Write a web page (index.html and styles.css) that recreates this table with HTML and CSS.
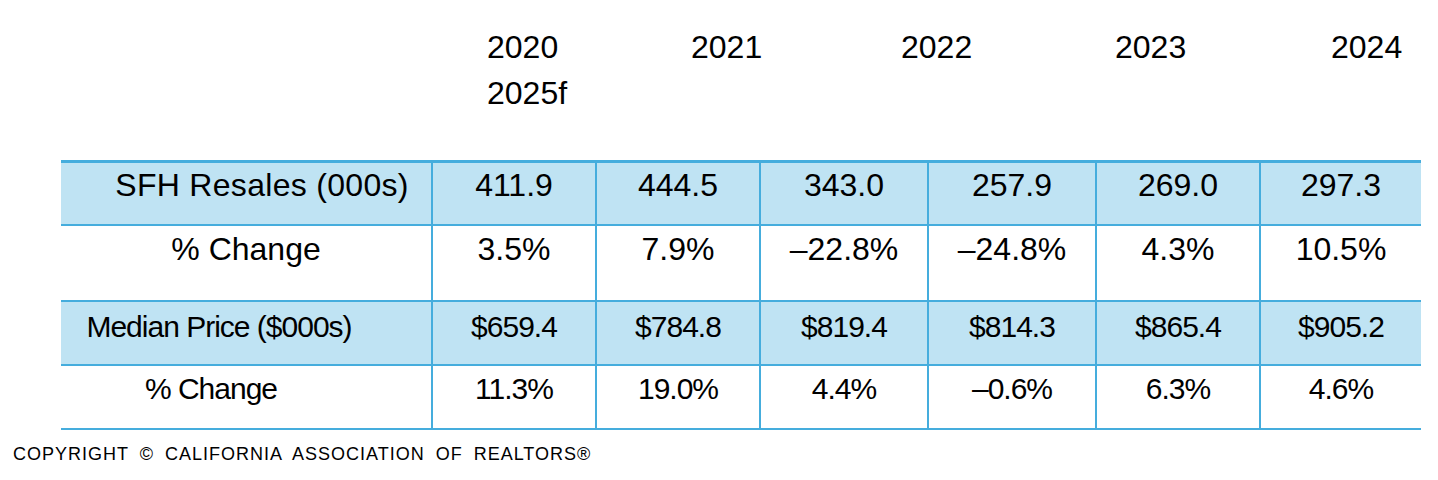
FILE: index.html
```html
<!DOCTYPE html>
<html lang="en">
<head>
<meta charset="utf-8">
<title>California Housing Forecast</title>
<link rel="stylesheet" href="styles.css">
</head>
<body>
<div class="page">
  <div class="years">
    <div class="year-line">
      <span class="year y1">2020</span>
      <span class="year y2">2021</span>
      <span class="year y3">2022</span>
      <span class="year y4">2023</span>
      <span class="year y5">2024</span>
    </div>
    <div class="year-line">
      <span class="year y1">2025f</span>
    </div>
  </div>

  <div class="table" role="table">
    <div class="row row-sales shaded" role="row">
      <div class="cell label">SFH Resales (000s)</div>
      <div class="cell">411.9</div>
      <div class="cell">444.5</div>
      <div class="cell">343.0</div>
      <div class="cell">257.9</div>
      <div class="cell">269.0</div>
      <div class="cell">297.3</div>
    </div>
    <div class="row row-sales-chg" role="row">
      <div class="cell label">% Change</div>
      <div class="cell">3.5%</div>
      <div class="cell">7.9%</div>
      <div class="cell">–22.8%</div>
      <div class="cell">–24.8%</div>
      <div class="cell">4.3%</div>
      <div class="cell">10.5%</div>
    </div>
    <div class="row row-price shaded" role="row">
      <div class="cell label">Median Price ($000s)</div>
      <div class="cell">$659.4</div>
      <div class="cell">$784.8</div>
      <div class="cell">$819.4</div>
      <div class="cell">$814.3</div>
      <div class="cell">$865.4</div>
      <div class="cell">$905.2</div>
    </div>
    <div class="row row-price-chg" role="row">
      <div class="cell label">% Change</div>
      <div class="cell">11.3%</div>
      <div class="cell">19.0%</div>
      <div class="cell">4.4%</div>
      <div class="cell">–0.6%</div>
      <div class="cell">6.3%</div>
      <div class="cell">4.6%</div>
    </div>
  </div>

  <p class="copyright">COPYRIGHT © CALIFORNIA ASSOCIATION OF REALTORS®</p>
</div>
</body>
</html>
```

FILE: styles.css
```css
html, body {
  margin: 0;
  padding: 0;
  background: #ffffff;
}

body {
  font-family: "Liberation Sans", Arial, "Helvetica Neue", sans-serif;
  color: #000000;
}

.page {
  width: 1438px;
  height: 480px;
  overflow: hidden;
}

/* Year header */
.years {
  padding: 24px 0 0 487px;
  height: 160px;
  box-sizing: border-box;
}

.year-line {
  display: flex;
  font-size: 32px;
  line-height: 46px;
}

.year {
  display: block;
}

.y1 { width: 204px; }
.y2 { width: 210px; }
.y3 { width: 214px; }
.y4 { width: 216px; }

/* Data table */
.table {
  margin-left: 61px;
  width: 1360px;
  display: flex;
  flex-direction: column;
  gap: 2px;
  background: #45addd;
  border-top: 3px solid #45addd;
  border-bottom: 2px solid #45addd;
}

.row {
  display: grid;
  grid-template-columns: 370px 162px 162px 166px 166px 162px 160px;
  column-gap: 2px;
}

.cell {
  background: #ffffff;
  text-align: center;
  white-space: nowrap;
  box-sizing: border-box;
}

.shaded .cell {
  background: #bfe3f3;
}

.row-sales .cell {
  height: 61px;
  font-size: 32px;
  line-height: 36px;
  padding-top: 4px;
}

.row-sales .label {
  letter-spacing: 0.3px;
  padding-left: 32px;
}

.row-sales-chg .cell {
  height: 74px;
  font-size: 32px;
  line-height: 36px;
  padding-top: 5px;
}

.row-price .cell {
  height: 62px;
  font-size: 30px;
  line-height: 34px;
  letter-spacing: -1px;
  padding-top: 8px;
}

.row-price .label {
  padding-right: 54px;
}

.row-price-chg .cell {
  height: 62px;
  font-size: 30px;
  line-height: 34px;
  letter-spacing: -1px;
  padding-top: 6px;
}

.row-price-chg .label {
  padding-right: 70px;
}

/* Footer */
.copyright {
  margin: 14px 0 0 13px;
  font-size: 18px;
  line-height: 20px;
  letter-spacing: 1px;
  word-spacing: 5px;
}
```
